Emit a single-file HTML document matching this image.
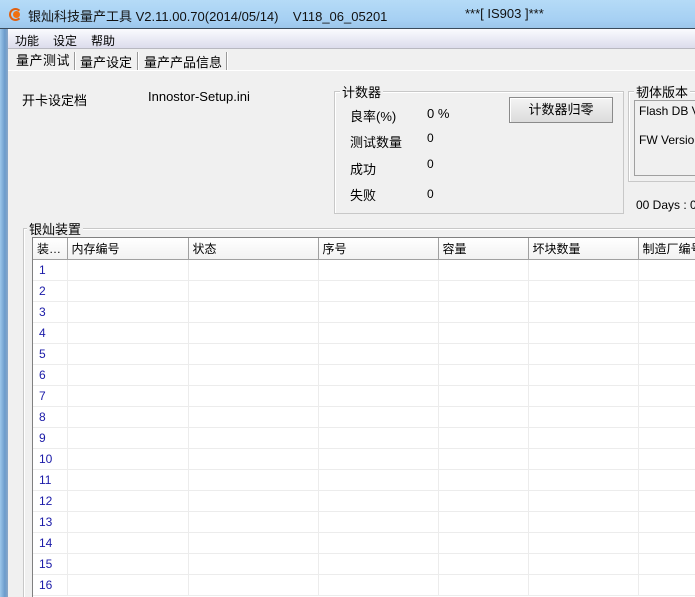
<!DOCTYPE html>
<html><head><meta charset="utf-8"><style>
*{margin:0;padding:0;box-sizing:border-box}
html,body{width:695px;height:597px;overflow:hidden}
body{background:#f0f0f0;font-family:"Liberation Sans","Noto Sans CJK SC",sans-serif;font-size:12px;color:#000;position:relative}
.a{position:absolute;white-space:nowrap}
#title{left:0;top:0;width:695px;height:29px;background:linear-gradient(#b5dbf7,#a6d0f3 70%,#9cc6ea);border-bottom:1px solid #3a4a5a}
#frame{left:0;top:29px;width:8px;height:568px;background:linear-gradient(90deg,#9cc6ea,#6c9ccc 60%,#8aa8c8);}
#menu{left:8px;top:29px;width:687px;height:20px;background:linear-gradient(#fafbfe,#dcdcec);border-bottom:1px solid #b8b8c0}
.grp{position:absolute;border:1px solid #c8c8c8;box-shadow:inset 1px 1px 0 #fff}
.lg{position:absolute;background:#f0f0f0;padding:0 2px;top:-10px}
table{border-collapse:collapse;table-layout:fixed}
td{height:21px;border-right:1px solid #ececec;border-bottom:1px solid #ececec;color:#1a1aa8;padding-left:6px;font-size:12px}
th{height:21px;font-weight:normal;text-align:left;padding-left:4px;background:linear-gradient(#fff,#f2f2f2);border-right:1px solid #a0a0a0;border-bottom:1px solid #a0a0a0;font-size:12px}
</style></head><body>
<div class="a" id="title"></div>
<div class="a" style="left:9px;top:8px;width:13px;height:13px;border-radius:50%;border:2px solid #e06010;border-right-color:transparent"></div>
<div class="a" style="left:13px;top:11px;width:7px;height:7px;border-radius:50%;background:#f07010"></div>
<div class="a" style="left:28px;top:6px;font-size:13px;color:#111">银灿科技量产工具 V2.11.00.70(2014/05/14)&nbsp;&nbsp;&nbsp; V118_06_05201</div>
<div class="a" style="left:465px;top:6px;font-size:13px;color:#111">***[ IS903 ]***</div>
<div class="a" id="frame"></div>
<div class="a" id="menu"></div>
<div class="a" style="left:15px;top:32px">功能</div>
<div class="a" style="left:53px;top:32px">设定</div>
<div class="a" style="left:91px;top:32px">帮助</div>
<div class="a" style="left:8px;top:70px;width:687px;height:1px;background:#fff"></div>
<div class="a" style="left:16px;top:50px;font-size:13px;letter-spacing:0.5px">量产测试</div>
<div class="a" style="left:74px;top:52px;width:2px;height:18px;border-left:1px solid #999;border-right:1px solid #fff"></div>
<div class="a" style="left:80px;top:52px;font-size:13px">量产设定</div>
<div class="a" style="left:137px;top:52px;width:2px;height:18px;border-left:1px solid #999;border-right:1px solid #fff"></div>
<div class="a" style="left:144px;top:52px;font-size:13px">量产产品信息</div>
<div class="a" style="left:226px;top:52px;width:2px;height:18px;border-left:1px solid #999;border-right:1px solid #fff"></div>

<div class="a" style="left:22px;top:90px;font-size:13px">开卡设定档</div>
<div class="a" style="left:148px;top:89px;font-size:13px">Innostor-Setup.ini</div>

<div class="grp" style="left:334px;top:91px;width:290px;height:123px"><div class="lg" style="left:5px;font-size:13px">计数器</div></div>
<div class="a" style="left:350px;top:106px;font-size:13px">良率(%)</div>
<div class="a" style="left:427px;top:106px;font-size:13px">0 %</div>
<div class="a" style="left:350px;top:132px;font-size:13px">测试数量</div>
<div class="a" style="left:427px;top:131px;font-size:12px">0</div>
<div class="a" style="left:350px;top:159px;font-size:13px">成功</div>
<div class="a" style="left:427px;top:157px">0</div>
<div class="a" style="left:350px;top:185px;font-size:13px">失败</div>
<div class="a" style="left:427px;top:187px">0</div>
<div class="a" style="left:509px;top:97px;width:104px;height:26px;border:1px solid #8a8a8a;background:linear-gradient(#f4f4f4,#dcdcdc);text-align:center;line-height:23px;font-size:13px;box-shadow:inset 1px 1px 0 #fff">计数器归零</div>

<div class="grp" style="left:628px;top:91px;width:80px;height:91px"><div class="lg" style="left:5px;font-size:13px">韧体版本</div></div>
<div class="a" style="left:634px;top:100px;width:70px;height:76px;border:1px solid #a0a0a0;background:#f0f0f0"></div>
<div class="a" style="left:639px;top:104px">Flash DB V</div>
<div class="a" style="left:639px;top:133px">FW Version</div>
<div class="a" style="left:636px;top:198px">00 Days : 0</div>

<div class="grp" style="left:23px;top:228px;width:700px;height:380px"><div class="lg" style="left:3px;font-size:13px">银灿装置</div></div>
<div class="a" style="left:32px;top:237px;width:670px;height:370px;border:1px solid #808080;border-right:none;background:#fff;overflow:hidden">
<table style="width:700px">
<colgroup><col style="width:34px"><col style="width:121px"><col style="width:130px"><col style="width:120px"><col style="width:90px"><col style="width:110px"><col style="width:95px"></colgroup>
<tr><th>装…</th><th>内存编号</th><th>状态</th><th>序号</th><th>容量</th><th>坏块数量</th><th>制造厂编号</th></tr>
<tr><td>1</td><td></td><td></td><td></td><td></td><td></td><td></td></tr>
<tr><td>2</td><td></td><td></td><td></td><td></td><td></td><td></td></tr>
<tr><td>3</td><td></td><td></td><td></td><td></td><td></td><td></td></tr>
<tr><td>4</td><td></td><td></td><td></td><td></td><td></td><td></td></tr>
<tr><td>5</td><td></td><td></td><td></td><td></td><td></td><td></td></tr>
<tr><td>6</td><td></td><td></td><td></td><td></td><td></td><td></td></tr>
<tr><td>7</td><td></td><td></td><td></td><td></td><td></td><td></td></tr>
<tr><td>8</td><td></td><td></td><td></td><td></td><td></td><td></td></tr>
<tr><td>9</td><td></td><td></td><td></td><td></td><td></td><td></td></tr>
<tr><td>10</td><td></td><td></td><td></td><td></td><td></td><td></td></tr>
<tr><td>11</td><td></td><td></td><td></td><td></td><td></td><td></td></tr>
<tr><td>12</td><td></td><td></td><td></td><td></td><td></td><td></td></tr>
<tr><td>13</td><td></td><td></td><td></td><td></td><td></td><td></td></tr>
<tr><td>14</td><td></td><td></td><td></td><td></td><td></td><td></td></tr>
<tr><td>15</td><td></td><td></td><td></td><td></td><td></td><td></td></tr>
<tr><td>16</td><td></td><td></td><td></td><td></td><td></td><td></td></tr>
</table></div>
</body></html>
